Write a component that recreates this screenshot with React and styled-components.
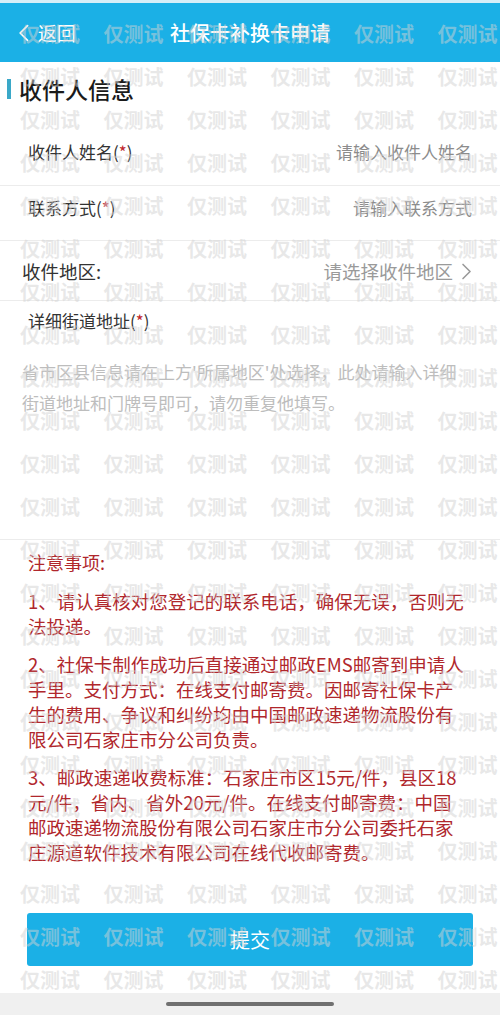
import styled, { createGlobalStyle } from 'styled-components'

const Global = createGlobalStyle`
	html, body {
		margin: 0;
		padding: 0;
		background: #fff;
	}
	body {
		font-family: "Noto Sans CJK SC", "Noto Sans", sans-serif;
	}
	* {
		box-sizing: border-box;
	}
`

const Page = styled.div`
	position: relative;
	width: 500px;
	height: 1015px;
	display: flex;
	flex-direction: column;
	overflow: hidden;
	background: #fff;
`

const TopStrip = styled.div`
	height: 3px;
	background: #d6eef8;
`

const Header = styled.header`
	height: 59px;
	background: #1bb0e6;
	display: flex;
	align-items: center;
	position: relative;
	color: #fff;
`

const Back = styled.div`
	display: flex;
	align-items: center;
	gap: 8px;
	padding-left: 18px;
	font-size: 19px;
	color: #fff;
`

const HeaderTitle = styled.h1`
	position: absolute;
	left: 0;
	right: 0;
	margin: 0;
	text-align: center;
	font-size: 20px;
	font-weight: 500;
	pointer-events: none;
`

const SectionTitle = styled.div`
	height: 58px;
	display: flex;
	align-items: center;
	gap: 8px;
	padding-left: 7px;
	padding-bottom: 4px;
	font-size: 23px;
	font-weight: 500;
	color: #1a1a1a;
	&::before {
		content: '';
		width: 4px;
		height: 20px;
		background: #3aa8c8;
	}
`

const Row = styled.div`
	display: flex;
	align-items: center;
	justify-content: space-between;
	padding: ${p => p.$pad};
	padding-left: ${p => p.$left || 28}px;
	padding-right: 28px;
	border-bottom: 1px solid #ececec;
	line-height: 24px;
`

const Label = styled.span`
	font-size: ${p => p.$size || 17}px;
	color: #333;
`

const Star = styled.span`
	color: #c0282e;
`

const Placeholder = styled.span`
	display: flex;
	align-items: center;
	gap: 8px;
	font-size: ${p => p.$size || 17}px;
	color: ${p => p.$color || '#8c8c8c'};
`

const AddressBlock = styled.div`
	height: 239px;
	padding: 8px 0 0;
	border-bottom: 1px solid #ececec;
	line-height: 24px;
`

const AddressLabel = styled.div`
	padding-left: 28px;
	font-size: 17px;
	color: #333;
`

const AddressHint = styled.div`
	margin-top: 23px;
	padding-left: 22px;
	width: 460px;
	font-size: 17px;
	line-height: 31px;
	color: #bdbdbd;
`

const Notes = styled.section`
	padding: 10px 32px 48px 28px;
	color: #b0272c;
	line-height: 25px;
`

const NotesTitle = styled.div`
	font-size: 18px;
`

const Note = styled.p`
	margin: ${p => p.$first ? 14 : 13}px 0 0;
	font-size: 18.5px;
`

const SubmitWrap = styled.div`
	padding: 0 27px;
`

const Submit = styled.button`
	width: 100%;
	height: 53px;
	border: none;
	border-radius: 3px;
	background: #1bb0e6;
	color: #fff;
	font-family: inherit;
	font-size: 20px;
	cursor: pointer;
`

const Spacer = styled.div`
	flex: 1;
`

const BottomBar = styled.div`
	height: 22px;
	background: #f0f0f0;
	display: flex;
	align-items: center;
	justify-content: center;
`

const HomeIndicator = styled.div`
	width: 168px;
	height: 4px;
	border-radius: 2px;
	background: #707070;
`

const Watermark = styled.div`
	position: absolute;
	top: 0;
	left: 0;
	right: 0;
	height: 993px;
	display: grid;
	grid-template-columns: repeat(6, 83.5px);
	grid-auto-rows: 43px;
	padding: 11.5px 0 0 20px;
	pointer-events: none;
	overflow: hidden;
`

const Mark = styled.span`
	font-size: 20px;
	font-weight: 700;
	line-height: 43px;
	white-space: nowrap;
	color: rgba(210, 210, 210, 0.5);
`

function Chevron({ dir = 'right', color, size = 16 }) {
	const pts = dir === 'right' ? '2,1 9,8 2,15' : '9,1 2,8 9,15'
	return (
		<svg width={size * 0.65} height={size} viewBox="0 0 11 16" fill="none">
			<polyline points={pts} stroke={color} strokeWidth="1.6" strokeLinecap="round" strokeLinejoin="round" />
		</svg>
	)
}

const notes = [
	'1、请认真核对您登记的联系电话，确保无误，否则无法投递。',
	'2、社保卡制作成功后直接通过邮政EMS邮寄到申请人手里。支付方式：在线支付邮寄费。因邮寄社保卡产生的费用、争议和纠纷均由中国邮政速递物流股份有限公司石家庄市分公司负责。',
	'3、邮政速递收费标准：石家庄市区15元/件，县区18元/件，省内、省外20元/件。在线支付邮寄费：中国邮政速递物流股份有限公司石家庄市分公司委托石家庄源道软件技术有限公司在线代收邮寄费。',
]

export default function App() {
	return (
		<Page>
			<Global />
			<TopStrip />
			<Header>
				<Back>
					<Chevron dir="left" color="#fff" size={18} />
					返回
				</Back>
				<HeaderTitle>社保卡补换卡申请</HeaderTitle>
			</Header>

			<SectionTitle>收件人信息</SectionTitle>

			<Row $pad="20px 0 21px">
				<Label>收件人姓名(<Star>*</Star>)</Label>
				<Placeholder>请输入收件人姓名</Placeholder>
			</Row>
			<Row $pad="10px 0 20px">
				<Label>联系方式(<Star>*</Star>)</Label>
				<Placeholder>请输入联系方式</Placeholder>
			</Row>
			<Row $pad="18px 0 17px" $left={22}>
				<Label $size={18.5}>收件地区:</Label>
				<Placeholder $size={18.5} $color="#9a9a9a">
					请选择收件地区
					<Chevron color="#9a9a9a" size={17} />
				</Placeholder>
			</Row>
			<AddressBlock>
				<AddressLabel>详细街道地址(<Star>*</Star>)</AddressLabel>
				<AddressHint>省市区县信息请在上方'所属地区'处选择，此处请输入详细街道地址和门牌号即可，请勿重复他填写。</AddressHint>
			</AddressBlock>

			<Notes>
				<NotesTitle>注意事项:</NotesTitle>
				{notes.map((n, i) => (
					<Note key={i} $first={i === 0}>{n}</Note>
				))}
			</Notes>

			<SubmitWrap>
				<Submit>提交</Submit>
			</SubmitWrap>

			<Spacer />
			<BottomBar>
				<HomeIndicator />
			</BottomBar>

			<Watermark>
				{Array.from({ length: 23 * 6 }).map((_, i) => (
					<Mark key={i}>仅测试</Mark>
				))}
			</Watermark>
		</Page>
	)
}
